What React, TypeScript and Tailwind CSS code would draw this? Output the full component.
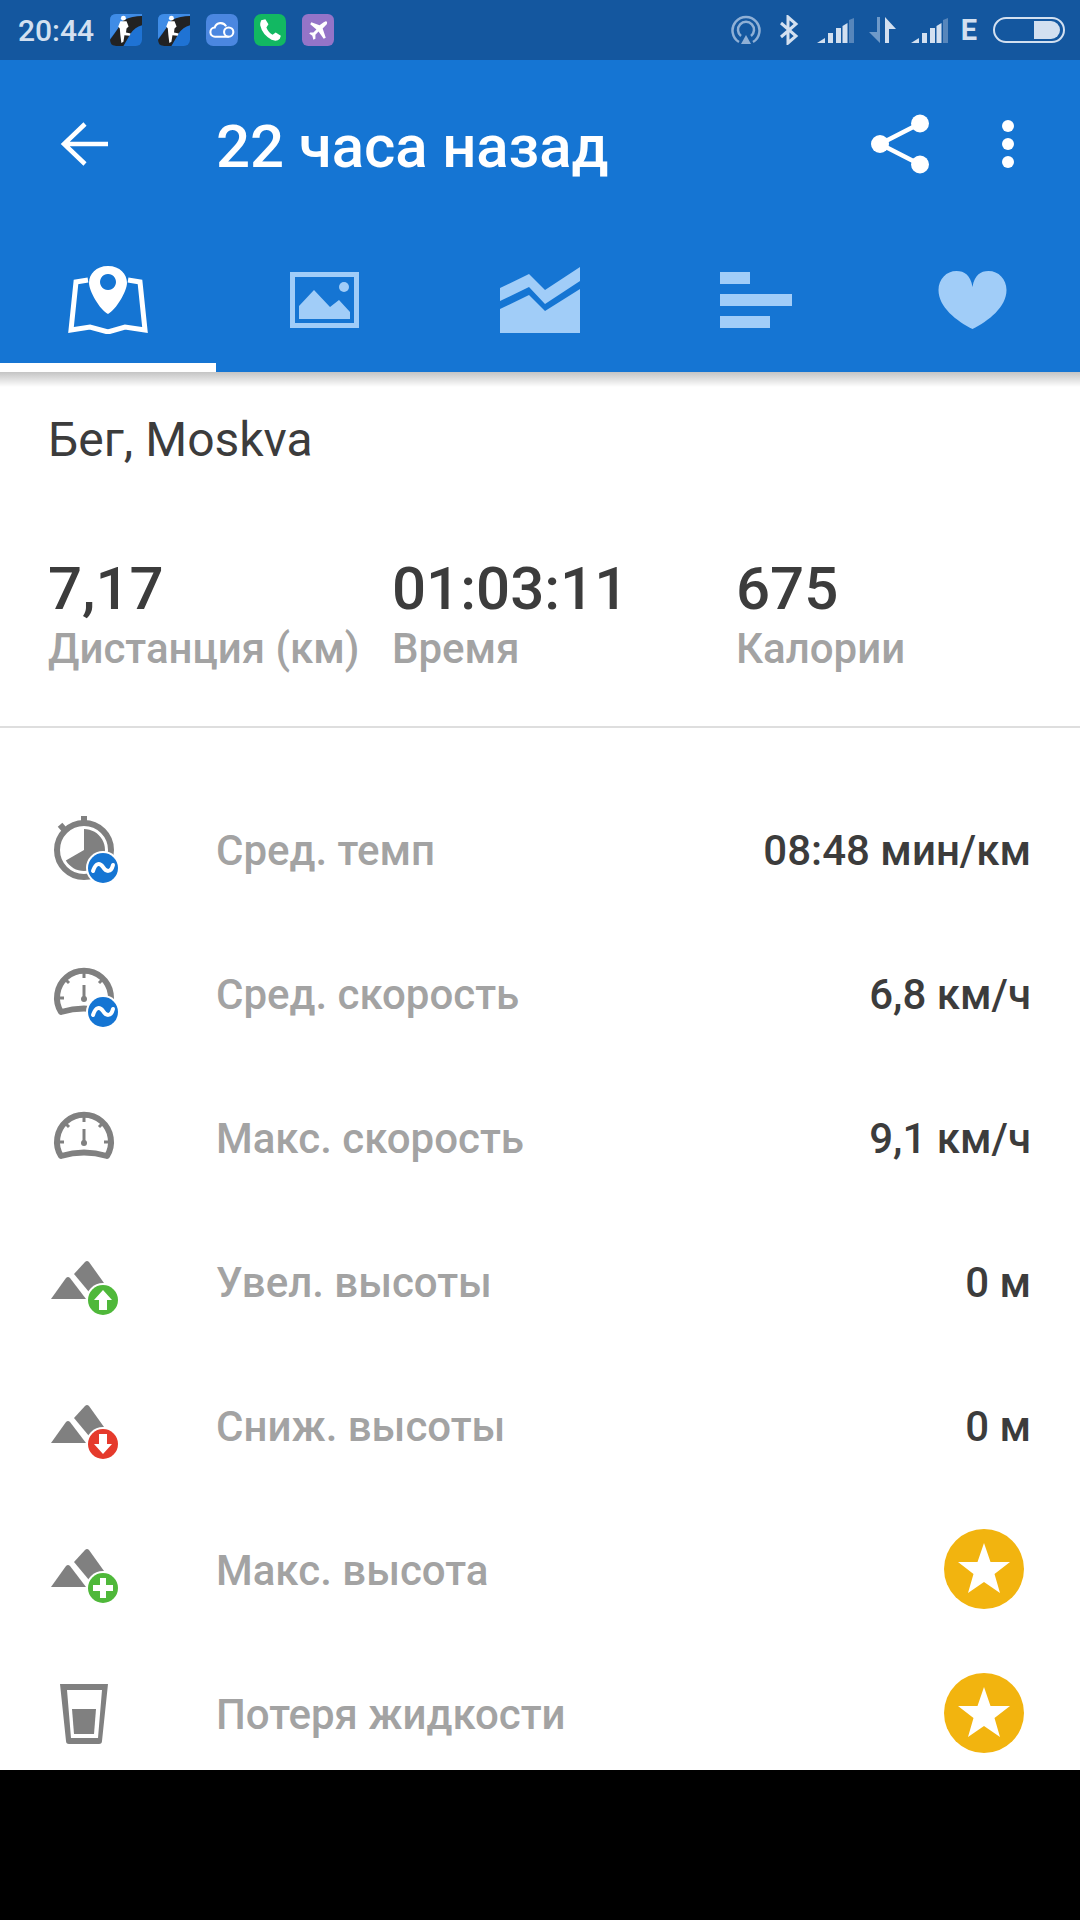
import React from "react";

const GRAY = "#808080";
const TAB = "#a1cdf8";

function Runner() {
  return (
    <svg width="32" height="32" viewBox="0 0 31 31">
      <rect width="31" height="31" rx="6" fill="#1f73d4" />
      <path d="M0 24 Q8 14 13 6 Q20 3 31 2 L31 0 L6 0 Q0 0 0 6 Z" fill="#3f8ce6" />
      <path d="M0 25 Q8 14 13 6 Q22 2 31 2 L31 11 Q24 13 20 19 L13 31 L6 31 Q0 31 0 25 Z" fill="#222" />
      <circle cx="13" cy="4" r="2.4" fill="#fff" />
      <path d="M10 7 L16 7 L18 12 L16 14 L15.5 18 L20 19 L19 21 L14 20.5 L13 27 L11 28 L10 20 L9.5 14 L8 12 Z" fill="#fff" />
    </svg>
  );
}

function Signal() {
  return (
    <svg width="37" height="25" viewBox="0 0 37 25" fill="#d3e0f0">
      <path d="M0 25 L8 20 V25 Z" />
      <rect x="11" y="15" width="5" height="10" />
      <rect x="19" y="10" width="5" height="15" />
      <path d="M25.5 8 L30.5 5 V25 H25.5 Z" />
      <path d="M32 2 L37 0 V25 H32 Z" opacity="0.35" />
    </svg>
  );
}

function StatusBar() {
  return (
    <div className="h-[60px] bg-[#14579f] flex items-center pl-[18px] pr-[15px]">
      <span className="text-[30px] font-medium text-[#d3e0f0] w-[92px] leading-none pt-[1px]">20:44</span>
      <div className="flex items-center gap-[16px]">
        <Runner />
        <Runner />
        <svg width="32" height="32" viewBox="0 0 31 31">
          <rect width="31" height="31" rx="7" fill="#4b87e0" />
          <path d="M9 22 a4.5 4.5 0 0 1 -0.5 -9 a6 6 0 0 1 11 -1 M9 22 H22" fill="none" stroke="#fff" strokeWidth="2" />
          <circle cx="22" cy="17.5" r="4.5" fill="none" stroke="#fff" strokeWidth="2" />
        </svg>
        <svg width="32" height="32" viewBox="0 0 31 31">
          <rect width="31" height="31" rx="7" fill="#12b862" />
          <path d="M7 6 L11 5 L14 10 L12 13 Q14 18 18 20 L21 18 L26 21 L25 24 Q22 27 17 25 Q8 20 6 11 Q6 8 7 6 Z" fill="#fff" />
        </svg>
        <svg width="32" height="32" viewBox="0 0 31 31">
          <rect width="31" height="31" rx="6" fill="#9474c8" />
          <path d="M23 7 Q25 7 24 10 L20 14 L23 23 L21 24 L16 17 L13 20 L13 24 L11 25 L10 21 L7 19 L8 18 L11 18 L14 15 L8 10 L9 8 L17 11 L21 8 Z" fill="#fff" />
        </svg>
      </div>
      <div className="ml-auto flex items-center">
        <svg width="30" height="30" viewBox="0 0 30 30" fill="none" stroke="#8fb0d6" strokeWidth="2.5">
          <path d="M8 27 A13.5 13.5 0 1 1 22 27" />
          <path d="M10 21 A8 8 0 1 1 20 21" />
          <path d="M15 20 L20 29 H10 Z" fill="#8fb0d6" stroke="none" />
        </svg>
        <svg className="ml-[18px]" width="20" height="30" viewBox="0 0 20 30" fill="none" stroke="#d3e0f0" strokeWidth="3">
          <path d="M2 8 L17 21 L9 28 V2 L17 9 L2 22" />
        </svg>
        <div className="ml-[18px]"><Signal /></div>
        <svg className="ml-[15px]" width="27" height="26" viewBox="0 0 27 26">
          <path d="M8 0 H11 V26 L0 15 H8 Z" fill="#6f9ac9" />
          <path d="M16 0 L27 12 H20 V26 H16 Z" fill="#d3e0f0" />
        </svg>
        <div className="ml-[15px]"><Signal /></div>
        <span className="ml-[13px] text-[29px] font-bold text-[#d3e0f0] leading-none">E</span>
        <div className="ml-[16px] w-[72px] h-[26px] rounded-full border-2 border-[#d3e0f0] flex justify-end items-center pr-[3px]">
          <div className="w-[26px] h-[18px] bg-[#d3e0f0] rounded-r-full" />
        </div>
      </div>
    </div>
  );
}

function AppBar() {
  return (
    <div className="relative z-10 h-[312px] bg-[#1575d3]">
      <div className="h-[168px] flex items-center text-white">
        <svg className="ml-[60px]" width="48" height="44" viewBox="0 0 48 44" fill="none" stroke="#fff" strokeWidth="4.5">
          <path d="M48 22 H4 M25 2 L4 22 L25 42" />
        </svg>
        <span className="ml-[108px] pt-[5px] text-[60px] font-medium leading-none tracking-[-0.1px]">22 часа назад</span>
        <svg className="ml-auto" width="58" height="60" viewBox="0 0 58 60" fill="#fff" stroke="#fff">
          <circle cx="9" cy="30" r="9" stroke="none" />
          <circle cx="49" cy="9.5" r="9" stroke="none" />
          <circle cx="49" cy="50.5" r="9" stroke="none" />
          <path d="M9 30 L49 9.5 M9 30 L49 50.5" strokeWidth="4.5" />
        </svg>
        <div className="ml-[73px] mr-[66px] flex flex-col gap-[6px]">
          <div className="w-3 h-3 rounded-full bg-white" />
          <div className="w-3 h-3 rounded-full bg-white" />
          <div className="w-3 h-3 rounded-full bg-white" />
        </div>
      </div>
      <div className="grid grid-cols-5 h-[144px] items-center">
        <div className="flex justify-center">
          <svg width="80" height="68" viewBox="0 0 78 68">
            <path d="M19 14 L7 16 L2 64 L21 61 L39 66 L56 61 L76 64 L71 16 L59 14" fill="none" stroke="#fff" strokeWidth="5" />
            <path fillRule="evenodd" fill="#fff" d="M39 0 C51 0 58 8 58 17 C58 25 47 44 39 48 C31 44 20 25 20 17 C20 8 27 0 39 0 Z M39 8 a8 8 0 1 0 0.01 0 Z" />
          </svg>
        </div>
        <div className="flex justify-center">
          <svg width="71" height="56" viewBox="0 0 69 56">
            <rect x="2.5" y="2.5" width="64" height="51" fill="none" stroke={TAB} strokeWidth="5" />
            <circle cx="54" cy="15" r="5" fill={TAB} />
            <path d="M9 47 V34 L24 18 L40 35 L49 28 L60 40 V47 Z" fill={TAB} />
          </svg>
        </div>
        <div className="flex justify-center">
          <svg width="80" height="66" viewBox="0 0 80 66" fill={TAB}>
            <path d="M0 21 L29 7 L45 23 L80 0 V14 L45 37 L29 20 L0 34 Z" />
            <path d="M0 42 L29 28 L45 44 L80 22 V66 H0 Z" />
          </svg>
        </div>
        <div className="flex justify-center">
          <svg width="72" height="56" viewBox="0 0 72 56" fill={TAB}>
            <rect width="30" height="12" />
            <rect y="22" width="72" height="12" />
            <rect y="44" width="50" height="12" />
          </svg>
        </div>
        <div className="flex justify-center">
          <svg width="71" height="58" viewBox="0 0 68 58">
            <path d="M34 58 C18 50 0 36 0 19 C0 8 8 0 18 0 C26 0 32 4 34 16 C36 4 42 0 50 0 C60 0 68 8 68 19 C68 36 50 50 34 58 Z" fill={TAB} />
          </svg>
        </div>
      </div>
      <div className="absolute left-0 bottom-0 w-[216px] h-[9px] bg-white" />
      <div className="absolute left-0 right-0 top-full h-[15px] bg-gradient-to-b from-[#c4c4c4] to-white" />
    </div>
  );
}

function Stat({ value, label }: { value: string; label: string }) {
  return (
    <div className="w-[344px]">
      <div className="text-[60px] font-medium leading-[60px] text-[#3c3c3c]">{value}</div>
      <div className="text-[42px] font-medium leading-[60px] text-[#a3a3a3]">{label}</div>
    </div>
  );
}

function Badge({ color, children }: { color: string; children: React.ReactNode }) {
  return (
    <g>
      <circle cx="55" cy="57" r="17" fill="#fff" />
      <circle cx="55" cy="57" r="15" fill={color} />
      {children}
    </g>
  );
}

const Wave = () => (
  <path d="M45 60 C48 51 52 52 55 56 C58 61 63 62 65 54" fill="none" stroke="#fff" strokeWidth="4" strokeLinecap="round" />
);

function Gauge() {
  return (
    <g fill="none" stroke={GRAY}>
      <path d="M13 57 A27 27 0 1 1 59 57 Q36 50 13 57 Z" strokeWidth="6" strokeLinejoin="round" />
      <path d="M36 17 V23 M17 24 L21 28 M55 24 L51 28 M10 43 H16 M62 43 H56" strokeWidth="3" />
      <path d="M36 30 V43" strokeWidth="3" />
      <circle cx="36" cy="44" r="3" fill={GRAY} stroke="none" />
    </g>
  );
}

const Mountains = () => (
  <g fill={GRAY}>
    <path d="M3 56 L18 35 Q20 33 22 35 L38 56 Z" />
    <path d="M26 31 L37 19 Q39 17 41 19 L56 40 L41 49 Z" />
  </g>
);

const icons: Record<string, React.ReactNode> = {
  pace: (
    <>
      <rect x="33" y="5" width="6" height="7" fill={GRAY} />
      <rect x="11" y="13" width="6" height="6" fill={GRAY} transform="rotate(-40 14 16)" />
      <circle cx="36" cy="39" r="27" fill="none" stroke={GRAY} strokeWidth="6" />
      <path d="M36 39 V18 A21 21 0 1 1 17.8 49.5 Z" fill={GRAY} />
      <Badge color="#1575d3"><Wave /></Badge>
    </>
  ),
  avg: (
    <>
      <Gauge />
      <Badge color="#1575d3"><Wave /></Badge>
    </>
  ),
  max: <Gauge />,
  up: (
    <>
      <Mountains />
      <Badge color="#4fb83a"><path d="M55 47 L64 57 H59 V67 H51 V57 H46 Z" fill="#fff" /></Badge>
    </>
  ),
  down: (
    <>
      <Mountains />
      <Badge color="#e53a2c"><path d="M55 67 L64 57 H59 V47 H51 V57 H46 Z" fill="#fff" /></Badge>
    </>
  ),
  high: (
    <>
      <Mountains />
      <Badge color="#4fb83a"><path d="M52 47 H58 V54 H65 V60 H58 V67 H52 V60 H45 V54 H52 Z" fill="#fff" /></Badge>
    </>
  ),
  glass: (
    <>
      <path d="M12 9 H60 L54 66 Q54 69 51 69 H21 Q18 69 18 66 Z M19 15 L23 63 H50 L54 15 Z" fill={GRAY} fillRule="evenodd" />
      <path d="M24 34 H48 L46 59 H26 Z" fill={GRAY} />
    </>
  ),
};

function Star() {
  return (
    <div className="w-[80px] h-[80px] mr-[7px] mb-[4px] rounded-full bg-[#f2b40f] flex items-center justify-center">
      <svg width="54" height="52" viewBox="0 0 54 52">
        <path d="M27 0 L33.5 19 L53 19 L37.5 31 L43 50 L27 39 L11 50 L16.5 31 L1 19 L20.5 19 Z" fill="#fff" />
      </svg>
    </div>
  );
}

const rows = [
  { icon: "pace", label: "Сред. темп", value: "08:48 мин/км" },
  { icon: "avg", label: "Сред. скорость", value: "6,8 км/ч" },
  { icon: "max", label: "Макс. скорость", value: "9,1 км/ч" },
  { icon: "up", label: "Увел. высоты", value: "0 м" },
  { icon: "down", label: "Сниж. высоты", value: "0 м" },
  { icon: "high", label: "Макс. высота", value: null },
  { icon: "glass", label: "Потеря жидкости", value: null },
];

export default function App() {
  return (
    <div className="w-[1080px] h-[1920px] bg-black font-['Roboto',sans-serif] overflow-hidden">
      <div className="h-[1770px] bg-white overflow-hidden">
        <StatusBar />
        <AppBar />
        <div className="h-[136px] pl-[48px] pt-[44px] text-[48px] leading-[48px] text-[#3c3c3c]">Бег, Moskva</div>
        <div className="flex pl-[48px] pt-[51px] h-[220px] border-b-2 border-[#dedede]">
          <Stat value="7,17" label="Дистанция (км)" />
          <Stat value="01:03:11" label="Время" />
          <Stat value="675" label="Калории" />
        </div>
        <div className="pt-[50px]">
          {rows.map((r) => (
            <div key={r.icon} className="h-[144px] flex items-center pt-[2px] pl-[48px] pr-[49px]">
              <svg width="80" height="80" viewBox="0 0 80 80" className="shrink-0">{icons[r.icon]}</svg>
              <span className="ml-[88px] mb-[2px] text-[42px] font-medium text-[#a3a3a3]">{r.label}</span>
              <div className="ml-auto">
                {r.value ? <span className="block mb-[2px] text-[42px] font-medium text-[#3c3c3c]">{r.value}</span> : <Star />}
              </div>
            </div>
          ))}
        </div>
      </div>
    </div>
  );
}
